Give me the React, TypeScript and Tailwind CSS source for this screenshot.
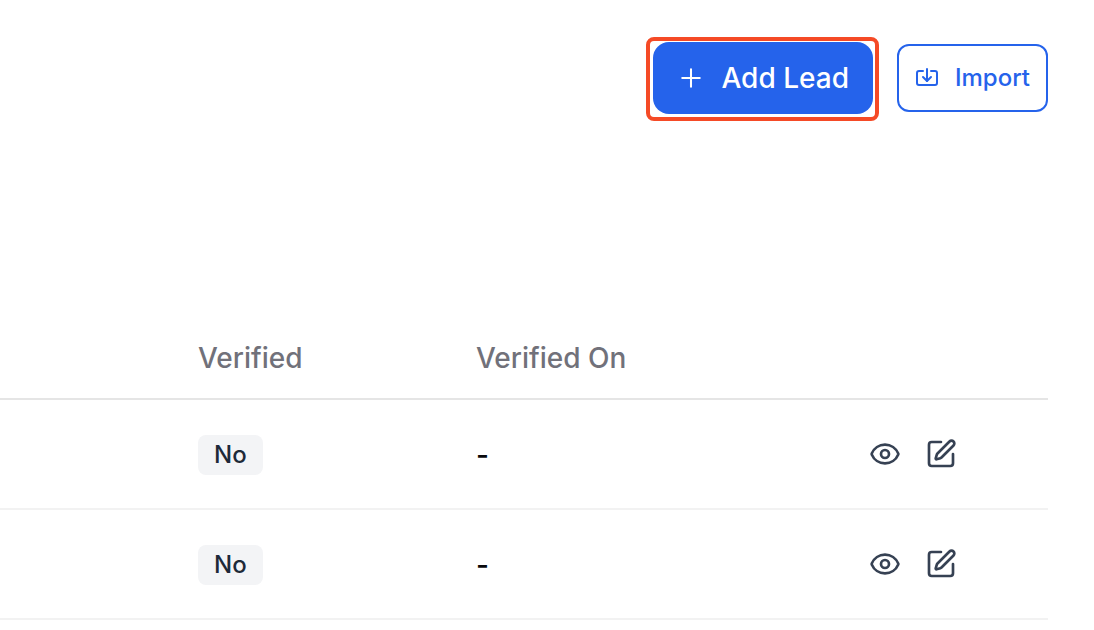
import { Eye, Import, SquarePen } from "lucide-react"
import { HiOutlinePlus } from "react-icons/hi2"

interface Lead {
    id: number
    verified: string
    verifiedOn: string
}

const leads: Lead[] = [
    { id: 1, verified: "No", verifiedOn: "-" },
    { id: 2, verified: "No", verifiedOn: "-" },
]

function LeadRow({ lead }: { lead: Lead }) {
    return (
        <tr className="h-[110px] border-b-2 border-[#f2f2f2]">
            <td />
            <td className="px-4 pt-0.5">
                <span className="flex h-10 w-fit items-center rounded-lg bg-gray-100 px-4 text-2xl font-medium text-gray-800">
                    {lead.verified}
                </span>
            </td>
            <td className="px-4 pt-0.5 text-[28px] font-medium text-zinc-950">{lead.verifiedOn}</td>
            <td>
                <div className="flex items-center gap-6">
                    <button type="button" aria-label="View lead" className="text-gray-700">
                        <Eye className="size-8" />
                    </button>
                    <button type="button" aria-label="Edit lead" className="text-gray-700">
                        <SquarePen className="size-8" />
                    </button>
                </div>
            </td>
        </tr>
    )
}

export default function App() {
    return (
        <div className="min-h-screen bg-white pr-[46px] pt-[42px] font-['Inter',sans-serif]">
            {/* Toolbar */}
            <div className="flex items-center justify-end gap-6">
                <div className="relative">
                    <button
                        type="button"
                        className="flex h-[72px] items-center gap-4 rounded-2xl bg-[#2563eb] px-6 text-[28px] font-medium text-white"
                    >
                        <HiOutlinePlus className="size-7" strokeWidth={1.75} />
                        Add Lead
                    </button>
                    {/* Highlight ring around the primary action */}
                    <div className="pointer-events-none absolute -bottom-[7px] -left-[7px] -right-[6px] -top-[5px] rounded-lg border-4 border-[#f54a26]" />
                </div>
                <button
                    type="button"
                    className="flex h-[68px] items-center gap-4 rounded-xl border-2 border-[#2563eb] px-4 text-2xl font-medium text-[#2563eb]"
                >
                    <Import className="size-6" />
                    Import
                </button>
            </div>

            {/* Leads table */}
            <table className="mt-[205px] w-full table-fixed border-collapse text-left">
                <thead>
                    <tr className="h-20 border-b-2 border-[#e5e5e5] text-[28px] text-[#71717a]">
                        <td className="w-[182px]" />
                        <th scope="col" className="w-[278px] px-4 pb-0.5 font-medium">Verified</th>
                        <th scope="col" className="px-4 pb-0.5 font-medium">Verified On</th>
                        <td className="w-[179px]" />
                    </tr>
                </thead>
                <tbody>
                    {leads.map((lead) => (
                        <LeadRow key={lead.id} lead={lead} />
                    ))}
                </tbody>
            </table>
        </div>
    )
}
